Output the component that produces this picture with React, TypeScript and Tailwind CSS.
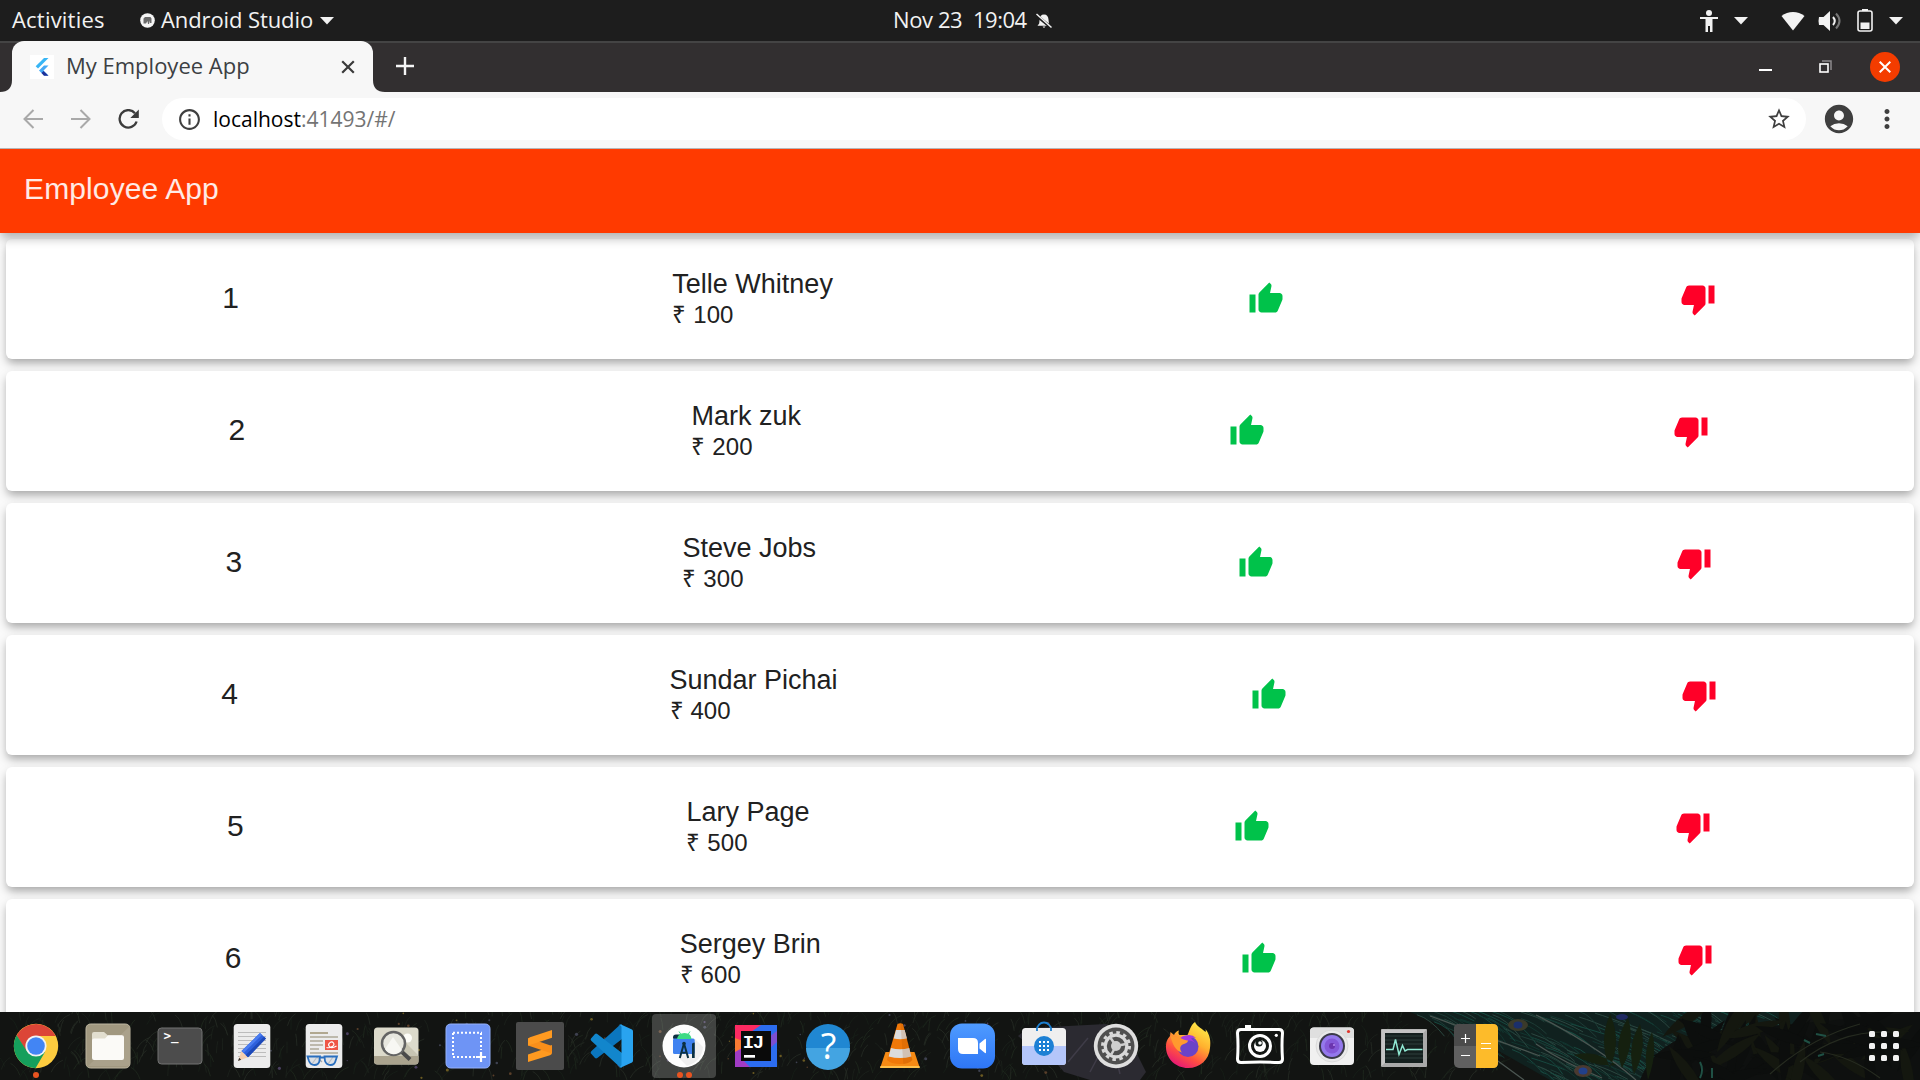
import React from "react";
import {
  MdThumbUp,
  MdThumbDown,
  MdInfoOutline,
  MdStarBorder,
  MdAccountCircle,
  MdMoreVert,
} from "react-icons/md";

const employees = [
  { id: 1, name: "Telle Whitney", salary: 100 },
  { id: 2, name: "Mark zuk", salary: 200 },
  { id: 3, name: "Steve Jobs", salary: 300 },
  { id: 4, name: "Sundar Pichai", salary: 400 },
  { id: 5, name: "Lary Page", salary: 500 },
  { id: 6, name: "Sergey Brin", salary: 600 },
];

const Caret = () => (
  <svg width="14" height="8" viewBox="0 0 14 8" fill="#f2f2f2">
    <path d="M0 0h14L7 7.5z" />
  </svg>
);

function TopBar() {
  return (
    <header className="grid h-[41px] shrink-0 grid-cols-[893px_1fr_auto] items-center bg-[#1d1d1d] font-['Open_Sans',sans-serif] text-[22px] leading-none whitespace-pre text-[#f2f2f2]">
      <div className="flex items-center pl-3">
        <span className="w-[128px] pb-[3px] tracking-[0.2px]">Activities</span>
        <svg width="15" height="15" viewBox="0 0 15 15">
          <circle cx="7.5" cy="7.5" r="7.3" fill="#f5f5f5" />
          <path d="M3.500 5.500L5 4h5.500l1 1.500V10H10V7.500L9 11H8L7.500 8 6 10.500H3.500z" fill="#6a6a6a" />
        </svg>
        <span className="ml-[6px] w-[159px] pb-[3px] tracking-[-0.1px]">Android Studio</span>
        <Caret />
      </div>
      <div className="flex items-center">
        <span className="w-[80px] pb-[3px] tracking-[-0.4px]">Nov 23</span>
        <span className="w-[63px] pb-[3px] tracking-[-0.5px]">19:04</span>
        <svg width="16" height="16" viewBox="0 0 16 16">
          <path d="M8 1.500c3 0 4.300 2 4.500 5l.4 4 1.600 2.200H1.500L3.200 10.500l.4-4C3.800 3.500 5 1.500 8 1.500zM6.500 13.500h3L8 15z" fill="#f2f2f2" />
          <path d="M.5 2.500L14.500 14" stroke="#1d1d1d" strokeWidth="3" />
          <path d="M.5 1L15.500 14.500" stroke="#f2f2f2" strokeWidth="1.500" />
        </svg>
      </div>
      <div className="flex items-center pr-[17px]">
        <svg width="18" height="22" viewBox="0 0 18 22" fill="#f2f2f2">
          <circle cx="9" cy="3" r="3" />
          <path d="M0 7h18v2h-5.500v13H10v-6H8v6H5.500V9H0z" />
        </svg>
        <span className="ml-4"><Caret /></span>
        <svg className="ml-[33px]" width="24" height="20" viewBox="0 0 24 20">
          <path d="M.5 5C7-.3 17-.3 23.500 5L12 19.500z" fill="#f2f2f2" />
        </svg>
        <svg className="ml-[13px]" width="23" height="22" viewBox="0 0 23 22">
          <path d="M1 7h4.500L12 1v20l-6.500-6H1q-1-4 0-8z" fill="#f2f2f2" />
          <path d="M15 7q3.500 4 0 8" stroke="#f2f2f2" strokeWidth="2" fill="none" />
          <path d="M18 3.500q7 7.500 0 15" stroke="#777" strokeWidth="2" fill="none" />
        </svg>
        <svg className="ml-4" width="16" height="23" viewBox="0 0 16 23">
          <path d="M5 0h6v2H5z" fill="#f2f2f2" />
          <rect x="1" y="2" width="14" height="20" rx="2" fill="none" stroke="#f2f2f2" strokeWidth="1.600" />
          <path d="M3.500 13.500h9V20h-9z" fill="#f2f2f2" />
        </svg>
        <span className="ml-4"><Caret /></span>
      </div>
    </header>
  );
}

function TabStrip() {
  return (
    <div className="flex h-[51px] shrink-0 justify-between border-t-2 border-[#444444] bg-[#322f30]">
      <div className="flex">
        <div className="flex w-3 items-end">
          <svg width="12" height="12" viewBox="0 0 12 12">
            <path d="M0 12Q12 12 12 0V12z" fill="#f7f7f7" />
          </svg>
        </div>
        <div className="-mt-[2px] flex h-[51px] w-[361px] items-center rounded-t-[12px] bg-[#f7f7f7] pl-[18px]">
          <svg width="24" height="24" viewBox="0 0 24 24">
            <path d="M0 0h24v24H0z" fill="#fff" />
            <path d="M14 3h4.500L8 13.500 5.700 11.200z" fill="#38b6f5" />
            <path d="M14 10.500h4.500L13.500 15.500l5 5H14L9 15.500z" fill="#45a9f5" />
            <path d="M11.500 18l2-2 5 4.800H14z" fill="#1d2f98" />
          </svg>
          <span className="ml-3 w-[275px] pb-[3px] font-['Open_Sans',sans-serif] text-[22px] leading-none text-[#3c4043]">
            My Employee App
          </span>
          <svg width="14" height="14" viewBox="0 0 14 14" stroke="#3a3a3a" strokeWidth="2.200">
            <path d="M1.200 1.200l11.600 11.600M12.800 1.200L1.200 12.800" />
          </svg>
        </div>
        <div className="flex w-3 items-end">
          <svg width="12" height="12" viewBox="0 0 12 12">
            <path d="M0 0Q0 12 12 12H0z" fill="#f7f7f7" />
          </svg>
        </div>
        <svg className="mt-[14px] ml-[11px]" width="18" height="18" viewBox="0 0 18 18" stroke="#f5f5f5" strokeWidth="2.400">
          <path d="M9 0v18M0 9h18" />
        </svg>
      </div>
      <div className="flex items-center pr-5 pb-[2px]">
        <svg className="mt-[7px]" width="13" height="2"><path d="M0 0h13v2H0z" fill="#fff" /></svg>
        <svg className="ml-[47px]" width="13" height="13" viewBox="0 0 13 13" fill="none">
          <path d="M3 1h9v9" stroke="#8d8b8c" strokeWidth="1.500" />
          <rect x="1" y="4" width="8" height="8" stroke="#fff" strokeWidth="1.600" />
        </svg>
        <div className="ml-[38px] grid size-[30px] place-items-center rounded-full bg-[#f43c00]">
          <svg width="12" height="12" viewBox="0 0 12 12" stroke="#fff" strokeWidth="2">
            <path d="M.7.7l10.600 10.600M11.300.7L.7 11.300" />
          </svg>
        </div>
      </div>
    </div>
  );
}

function Toolbar() {
  return (
    <div className="flex h-[57px] shrink-0 items-center border-b border-[#b6b4b6] bg-[#f7f7f7] pb-[2px] text-[#3f3f3f]">
      <svg className="ml-[23px]" width="20" height="20" viewBox="0 0 20 20" fill="none" stroke="#a9a9a9" strokeWidth="2">
        <path d="M20 10H1.500M10.500 1L1.500 10l9 9" />
      </svg>
      <svg className="ml-7" width="20" height="20" viewBox="0 0 20 20" fill="none" stroke="#a9a9a9" strokeWidth="2">
        <path d="M0 10h18.500M9.500 1l9 9-9 9" />
      </svg>
      <svg className="ml-[27px]" width="22" height="20" viewBox="0 0 22 20" fill="none">
        <path d="M17 4.200A8.700 8.700 0 1 0 18.600 12.500" stroke="#3c3c3c" strokeWidth="2.300" />
        <path d="M20.800.5v8.500h-8.500z" fill="#3c3c3c" />
      </svg>
      <div className="ml-[22px] flex h-[42px] flex-1 items-center rounded-full bg-white">
        <MdInfoOutline className="ml-[15px] size-[25px]" />
        <span className="ml-[11px] flex-1 font-['Open_Sans',sans-serif] text-[21px] leading-none text-black">
          localhost<span className="text-[#747474]">:41493/#/</span>
        </span>
        <MdStarBorder className="mr-[14px] size-[26px]" />
      </div>
      <MdAccountCircle className="ml-4 size-[34px]" />
      <MdMoreVert className="mr-[18px] ml-4 size-[30px]" />
    </div>
  );
}

function EmployeeCard({ id, name, salary }: { id: number; name: string; salary: number }) {
  return (
    <div className="flex h-[120px] shrink-0 items-center justify-around rounded-[6px] bg-white shadow-[0_5px_10px_-1px_rgba(0,0,0,0.34)]">
      <span className="pb-[2px] text-[30px] leading-none">{id}</span>
      <div className="pl-px">
        <p className="-mt-px pb-px text-[27px] leading-[31px]">{name}</p>
        <p className="text-[24px] leading-[28px] tracking-[0.1px]">₹ {salary}</p>
      </div>
      <div className="flex w-0 justify-center">
        <MdThumbUp className="ml-px size-9 shrink-0 text-[#00c24a]" />
      </div>
      <div className="flex w-0 justify-center">
        <MdThumbDown className="size-9 shrink-0 text-[#ff0028]" />
      </div>
    </div>
  );
}

const glyph = (children: React.ReactNode) => (
  <svg width="48" height="48" viewBox="0 0 48 48" className="relative overflow-visible">
    {children}
  </svg>
);

const chrome = glyph(
  <>
    <circle cx="24" cy="24" r="22.200" fill="#fdcc3f" />
    <path d="M4.600 13.500A22.200 22.200 0 0 1 43.700 14H24L14 29z" fill="#dc4537" />
    <path d="M4.600 13.300A22.200 22.200 0 0 0 23.500 46.200L33 30 24 33 14.800 29z" fill="#159f5c" />
    <circle cx="24" cy="24" r="10.600" fill="#f2f2f2" />
    <circle cx="24" cy="24" r="8.800" fill="#4285f4" />
  </>
);

const files = glyph(
  <>
    <rect x="2" y="2" width="44" height="44" rx="4.500" fill="#a19880" stroke="#bdb5a0" />
    <path d="M46 4L4 44h38q4 0 4-4z" fill="#aaa18b" />
    <path d="M8 12q0-2 2-2h10l4 3.500h14v8H8z" fill="#e2decf" />
    <path d="M8 18.500q0-2 2-2h11l3-3.300h14q2 0 2 2V36q0 2-2 2H10q-2 0-2-2z" fill="#fbfaf7" />
  </>
);

const terminal = glyph(
  <>
    <rect x="2" y="6" width="44" height="36" rx="3.500" fill="#4c4c4c" stroke="#727272" />
    <text x="7.500" y="18" fill="#fff" fontFamily="DejaVu Sans Mono" fontSize="12.500" fontWeight="700">&gt;_</text>
  </>
);

const editor = glyph(
  <>
    <rect x="5.700" y="2" width="36.600" height="44" rx="3.500" fill="#ececec" />
    <path d="M10 10.500h28M10 14.500h28M10 18.500h28M10 22.500h28M10 26.500h28M10 30.500h28M10 34.500h28" stroke="#bcbcbc" />
    <path d="M10 39l3.500-10 6.500 6.300z" fill="#f6cfae" />
    <path d="M10 39l1.200-3.300 2 2z" fill="#333" />
    <path d="M13.500 29L32 11l6 5.500L20 35.300z" fill="#2e60dc" />
    <path d="M13.500 29L32 11l2 1.900L15.700 31z" fill="#4b7df0" />
    <path d="M17.700 33.100L36 14.700l2 1.800L20 35.300z" fill="#1d49b8" />
  </>
);

const documentViewer = glyph(
  <>
    <rect x="5.700" y="2" width="36.600" height="44" rx="3.500" fill="#ececec" />
    <path d="M10 11h18" stroke="#b1a890" strokeWidth="2" />
    <path d="M10 15h28M10 19h13M10 23h13M10 27h9M10 31h28" stroke="#bdb9ac" strokeWidth="1.800" />
    <path d="M25 18h13v10H25z" fill="#ef5545" />
    <path d="M26.500 25.500c4 1 9-2 7-4.500s-6 .5-4.500 3 5 1.500 7.500 0" stroke="#fff" strokeWidth="1.200" fill="none" />
    <path d="M12 42l5-7M22 40l-5-5M28 42l5-7" stroke="#aaa" strokeWidth="1.200" />
    <path d="M7.500 34.500h12.500l-.5 4.500q-1 4-5 4t-5.500-4zM24.500 34.500H37L35.500 39q-1 4-5 4t-5.500-4zM20 35.500h4.500" stroke="#2a6fbe" strokeWidth="1.800" fill="#c9d4df" fillOpacity=".5" />
  </>
);

const imageViewer = glyph(
  <>
    <rect x="2" y="5.500" width="44.500" height="37" rx="3.500" fill="#dcdacb" />
    <path d="M2 34h44.500v5q0 3.500-3.500 3.500H5.500Q2 42.500 2 39z" fill="#aaa38e" />
    <path d="M22 34l12-13 12 12v1z" fill="#c7c4b2" />
    <circle cx="35.500" cy="16" r="4.500" fill="#fdfdf8" />
    <path d="M30 30l8 7.500" stroke="#4a4a4a" strokeWidth="4" />
    <circle cx="21.500" cy="21.500" r="11.500" fill="#e7e7df" stroke="#646464" strokeWidth="2.500" />
    <path d="M13 27l8-12 9 13a10 10 0 0 1-17-1z" fill="#f7f7f3" />
  </>
);

const screenshotTool = glyph(
  <>
    <rect x="2" y="2" width="44" height="44" rx="4.500" fill="#6e94f5" stroke="#94b0fa" />
    <path d="M9 10.800h29M9 35h22M9 11v24M37 11v17" stroke="#fff" strokeWidth="2" strokeDasharray="2 2" fill="none" />
    <path d="M37 30v10M32 35h10" stroke="#fff" strokeWidth="2.200" />
  </>
);

const sublime = glyph(
  <>
    <rect width="48" height="48" rx="2" fill="#4b4b4b" />
    <path d="M36 23v7.500q0 2-2 2.700L12 40v-7.500L28 27z" fill="#ff9a20" />
    <path d="M12 16v7.500l24 8V24L20 18.500z" fill="#f98f1a" />
    <path d="M36 8v7.700l-16 5.300-8 2.500V18q0-2 2-2.700z" fill="#ff9a20" />
  </>
);

const vscode = glyph(
  <>
    <path d="M3 31.500l4 4.500q1 .8 2.300 0L34 17V2.500q-1.500 0-3 1.200L3.500 29q-1.500 1.200-.5 2.500z" fill="#0b76be" />
    <path d="M3 16.500L7 12q1-.8 2.300 0L34 31v14.500q-1.500 0-3-1.200L3.500 19q-1.500-1.200-.5-2.500z" fill="#1286cc" />
    <path d="M33 2.500l11 5q1 .6 1 2v29q0 1.400-1 2l-11 5q-1.500.4-2.500-1 3 1 3-2V5.500q0-3-3-2 1-1.300 2.500-1z" fill="#29a3ef" />
  </>
);

const androidStudio = glyph(
  <>
    <circle cx="24" cy="24" r="21.500" fill="#fdfdfd" />
    <path d="M35 17l8 8q-1 14-16 19l-8-8z" fill="#efefef" />
    <path d="M13 15.500q0-3 3-3h4v5h-5q-2 0-2-2z" fill="#0c3040" />
    <rect x="13" y="16.500" width="21.700" height="15.500" rx="1.500" fill="#3f82f0" />
    <path d="M17 17q1-6 7.500-6T31.500 17z" fill="#3ddb84" />
    <path d="M19 9.500l2 3M30 9.500l-2 3" stroke="#3ddb84" />
    <path d="M32 22q0-1.500 2.700-1.500V36H32z" fill="#0c3040" />
    <path d="M24 21.500L19.800 36M24 21.500L28.200 36M21.500 30q2.500 1.500 5 0" stroke="#0c3040" strokeWidth="2" fill="none" />
    <circle cx="24" cy="21.500" r="1.800" fill="#0c3040" />
  </>
);

const intellij = glyph(
  <>
    <path d="M3 3h42v42H3z" fill="#2c6df0" />
    <path d="M3 3h26L16 12 3 24z" fill="#fd2a62" />
    <path d="M3 16l8 3v9l-8 7z" fill="#f87a33" />
    <path d="M3 30l9-5v14l6 6H3z" fill="#a13bc4" />
    <path d="M45 9v11l-8 7V15z" fill="#7c4fd0" />
    <path d="M9 9h30v30H9z" fill="#0a0a0a" />
    <text x="10.800" y="25.500" fill="#fff" fontFamily="Liberation Mono" fontSize="19" fontWeight="700" letterSpacing="-1.500">IJ</text>
    <path d="M12 33h11v2.700H12z" fill="#fff" />
  </>
);

const help = glyph(
  <>
    <circle cx="24" cy="24" r="22" fill="#2087d2" />
    <path d="M2 26a22 22 0 0 0 44 0z" fill="#43a4e2" />
    <text x="24.500" y="37" textAnchor="middle" fill="#fff" fontFamily="Open Sans" fontSize="36">?</text>
  </>
);

const vlc = glyph(
  <>
    <path d="M9.500 30h29l5.200 15.500H4.300z" fill="#f68a14" />
    <path d="M4.500 44h39l.3 2H4z" fill="#ffc04a" />
    <path d="M21.500 2q2.800-1.500 5.500 0l9.300 36q-3 4-12.200 4T11 38z" fill="#f07808" />
    <path d="M20 8h8.700l2.200 8.500q-6.700 1.500-13.200 0z" fill="#dcdcdc" />
    <path d="M15 26q9 2.500 18.200 0l2.200 8.500q-11 3-22.800 0z" fill="#dcdcdc" />
    <path d="M24.500 1q1.500 0 2.500 1l9.300 36q-3 3.500-9 4z" fill="#a04a00" opacity=".18" />
  </>
);

const zoomApp = glyph(
  <>
    <defs>
      <linearGradient id="zoomFill" x2="0" y2="1">
        <stop stopColor="#4f9bff" />
        <stop offset="1" stopColor="#2e76f6" />
      </linearGradient>
    </defs>
    <rect x="2" y="1.500" width="45" height="45" rx="12" fill="url(#zoomFill)" />
    <path d="M10 16h15q5 0 5 5v11H15q-5 0-5-5zM31.500 21.500l5.500-4.500q1-.6 1 .5v13q0 1-1 .5l-5.500-4.500z" fill="#fff" />
  </>
);

const software = glyph(
  <>
    <path d="M17 9V7.500a7 7 0 0 1 14 0V9" stroke="#1d7fd0" strokeWidth="1.800" fill="none" />
    <rect x="2" y="6" width="44" height="37" rx="3.500" fill="#efefef" />
    <path d="M2 24h44v15.500q0 3.500-3.500 3.500h-37Q2 43 2 39.500z" fill="#b4c6fa" />
    <path d="M17 6v3M31 6v3" stroke="#1d7fd0" strokeWidth="1.800" />
    <circle cx="24" cy="24" r="10" fill="#1d80d4" />
    <path d="M19 20h10M19 24h10M19 28h10" stroke="#fff" strokeWidth="2" strokeDasharray="2 2" />
  </>
);

const settings = glyph(
  <>
    <circle cx="24" cy="24" r="22.200" fill="#dedede" />
    <circle cx="24" cy="24" r="18.500" fill="#4f4f4f" />
    <circle cx="24" cy="24" r="13.500" fill="none" stroke="#d8d8d8" strokeWidth="3" strokeDasharray="3.530 3.530" />
    <circle cx="24" cy="24" r="10.800" fill="none" stroke="#d8d8d8" strokeWidth="3.200" />
    <circle cx="24" cy="24" r="5" fill="#cfcfcf" />
    <path d="M24 24l10-2M24 24l-5 9M24 24l-6-9" stroke="#cfcfcf" strokeWidth="2.500" />
  </>
);

const firefox = glyph(
  <>
    <defs>
      <linearGradient id="foxFill" x1=".8" y1="0" x2=".25" y2="1">
        <stop stopColor="#fff04a" />
        <stop offset=".4" stopColor="#ffb02e" />
        <stop offset=".7" stopColor="#ff5040" />
        <stop offset="1" stopColor="#e3127d" />
      </linearGradient>
    </defs>
    <path d="M31 0c2 5 8 7 10.500 10 .5-1 .3-2 0-3C46 13 47 19 46 26c-1 12-10 20-22 20S2.500 37 2 26c-.3-6 1.500-9 4-12l.5-4 3.500 3c1-2.500 3-4 5-4.500-1 2-.5 3.500.5 4.500l8 0c2-4 3-10 7.500-13z" fill="url(#foxFill)" />
    <circle cx="24" cy="24.500" r="10.500" fill="#6a43c8" />
    <path d="M14 19q3-6 11-6 4 0 7 3-3-.5-5 .5l6 6q-4-4-8-4-6 0-11 .5z" fill="#a33ae0" />
    <path d="M6.500 14l9 1.500q5 3 8.500 3 0 2-4 3.500c-4 1-5 5-2 8.500-6-1-10-9-11.500-16.500z" fill="#ff9a2e" />
  </>
);

const cameraOutline = glyph(
  <>
    <path d="M9 3h6v4H9z" fill="#fff" />
    <path d="M5 7.500h38q3.500 0 3.500 3.500-1 12 0 26 0 3.500-3.500 3.500-19-1-38 0Q1.500 40.500 1.500 37q1-13 0-26 0-3.500 3.500-3.500z" fill="none" stroke="#fff" strokeWidth="3" />
    <circle cx="24" cy="24" r="10.500" fill="none" stroke="#fff" strokeWidth="3" />
    <circle cx="24" cy="24" r="6" fill="#fff" />
    <circle cx="23" cy="21" r="3.600" fill="#121a16" />
    <circle cx="24" cy="21" r="1.800" fill="#fff" />
    <circle cx="40.300" cy="13.300" r="1.600" fill="#fff" />
  </>
);

const webcam = glyph(
  <>
    <rect x="2" y="5.500" width="44" height="37.500" rx="4" fill="#f0f0f0" />
    <path d="M2 16V9.500q0-4 4-4h36q4 0 4 4V16z" fill="#dfdfdf" />
    <circle cx="24" cy="24" r="16" fill="#e9e9e9" stroke="#d2d2d2" strokeWidth=".7" />
    <circle cx="24" cy="24" r="13" fill="#3a3a48" />
    <circle cx="24" cy="24" r="11" fill="#9478ec" />
    <circle cx="24" cy="24" r="7.500" fill="#8458d8" />
    <circle cx="24" cy="24" r="3" fill="#6b35ae" />
    <circle cx="26" cy="23" r="1" fill="#b98cf5" />
    <circle cx="40.500" cy="9.500" r="1.600" fill="#e0352b" />
  </>
);

const monitor = glyph(
  <>
    <rect x="1" y="7" width="46" height="38" rx="1" fill="#a9a9a9" />
    <path d="M1.500 7.500h45l-3 3.500H5v30l-3.500 3z" fill="#c4c4c4" />
    <path d="M5 11h38v30H5z" fill="#15201f" />
    <path d="M5 14h38M5 18h38M5 22h38M5 32h38M5 36h38" stroke="#2f3e3d" />
    <path d="M6 27.500h7l2.500-10L19 32.500l3.500-9 2.500 5.500 2.500-1.500h15" fill="none" stroke="#8fe8d2" strokeWidth="1.500" />
  </>
);

const calculator = glyph(
  <>
    <rect x="2" y="2" width="44" height="44" rx="5" fill="#606060" />
    <path d="M24 2H7Q2 2 2 7v17h22z" fill="#4b4b4b" />
    <path d="M24 2h17q5 0 5 5v34q0 5-5 5H24z" fill="#fdbb2a" />
    <path d="M13.500 12v9M9 16.500h9M9 33.500h9M29 21.500h10M29 26.500h10" stroke="#fff" strokeWidth="1.200" />
  </>
);

const dock = [
  { key: "Chrome", icon: chrome, windows: 1 },
  { key: "Files", icon: files },
  { key: "Terminal", icon: terminal },
  { key: "Text Editor", icon: editor },
  { key: "Document Viewer", icon: documentViewer },
  { key: "Image Viewer", icon: imageViewer },
  { key: "Screenshot", icon: screenshotTool },
  { key: "Sublime Text", icon: sublime },
  { key: "VS Code", icon: vscode },
  { key: "Android Studio", icon: androidStudio, windows: 2, active: true },
  { key: "IntelliJ IDEA", icon: intellij },
  { key: "Help", icon: help },
  { key: "VLC", icon: vlc },
  { key: "Zoom", icon: zoomApp },
  { key: "Software", icon: software },
  { key: "Settings", icon: settings },
  { key: "Firefox", icon: firefox },
  { key: "Camera", icon: cameraOutline },
  { key: "Cheese", icon: webcam },
  { key: "System Monitor", icon: monitor },
  { key: "Calculator", icon: calculator },
];

// Deterministic pseudo-random value in [0, 1) for the wallpaper strokes.
const rnd = (n: number) => {
  const v = Math.sin(n * 127.1 + 11.7) * 43758.5453;
  return v - Math.floor(v);
};

function Wallpaper() {
  const grassTones = ["#1f2a1e", "#171f18", "#262c25", "#1c221c"];
  const featherTones = ["#17483f", "#1d3c36", "#2b4740", "#12352f"];
  const flowerTones = ["#6a5a22", "#4b4060", "#5a3f2a", "#3e4150"];
  return (
    <svg className="absolute inset-0" width="1920" height="68" viewBox="0 0 1920 68" preserveAspectRatio="none">
      <rect width="1920" height="68" fill="#121412" />
      {Array.from({ length: 900 }, (_, i) => {
        const x = rnd(i) * 1500;
        const y = rnd(i + 2000) * 72;
        const dx = (rnd(i + 4000) - 0.4) * 24;
        return (
          <path key={i} d={`M${x} ${y}q${dx / 3} -9 ${dx} -12`} stroke={grassTones[i % 4]} strokeWidth=".8" fill="none" />
        );
      })}
      {Array.from({ length: 80 }, (_, i) => (
        <circle key={i} cx={250 + rnd(i + 70) * 800} cy={rnd(i + 900) * 66} r={0.6 + rnd(i + 50)} fill={flowerTones[i % 4]} />
      ))}
      <path d="M1018 24l10-8 40-2 38-2 22 12 18 36-6 8h-50l-26-8-12-14-20-10z" fill="#2b2a31" />
      <path d="M1068 50l20-24M1090 60l18-34M1120 62l-10-40M1030 22l30 10" stroke="#3f3c48" strokeWidth="1.500" />
      <path d="M1410 0h400l-30 26-50 42h-180l-60-34z" fill="#10211f" />
      {Array.from({ length: 320 }, (_, i) => {
        const x = 1410 + rnd(i + 300) * 370;
        const y = rnd(i + 700) * 72 - 6;
        if (x < 1536 && y > (x - 1410) * 0.5) return null;
        return (
          <path key={i} d={`M${x} ${y}q14 4 ${22 + rnd(i) * 14} ${10 + rnd(i + 9) * 14}`} stroke={featherTones[i % 4]} fill="none" />
        );
      })}
      <path d="M1480 36l44 32M1536 3q60 30 100 65M1536 32q30 20 66 34M1430 4l110 40" stroke="#4b5551" strokeWidth="1.300" fill="none" />
      <ellipse cx="1518" cy="13" rx="10" ry="6" fill="#3a3a2a" />
      <ellipse cx="1518" cy="13" rx="4.500" ry="3.500" fill="#1b2f6b" />
      <ellipse cx="1583" cy="59" rx="9" ry="6" fill="#4a3a30" />
      <ellipse cx="1583" cy="59" rx="4.500" ry="3.500" fill="#22408a" />
      <ellipse cx="1622" cy="5" rx="6" ry="3" fill="#202a63" />
      <path d="M1640 68q20-50 90-50l190-18v68z" fill="#0e100f" />
      {Array.from({ length: 60 }, (_, i) => {
        const x = 1668 + rnd(i + 33) * 250;
        const y = 4 + rnd(i + 55) * 62;
        const a = rnd(i + 77) * 180;
        return (
          <path key={i} d="M-32 0Q0 -11 32 0Q0 11 -32 0z" transform={`translate(${x} ${y}) rotate(${a})`} fill={i % 3 ? "#0c0e0d" : "#14170f"} />
        );
      })}
      <path d="M1610 2q-12 28 0 54 12-28 0-54zM1628 6q-16 24-6 50 14-26 6-50zM1640 12q-14 22-6 50 14-26 6-50zM1574 43q22-6 42 10-22 2-42-10zM1652 20q-10 20-4 48 10-28 4-48z" fill="#15200f" />
      <path d="M1800 50q40-32 90-30M1770 62q40-36 90-50M1820 40q30 4 60 26" stroke="#262b20" strokeWidth="1.200" fill="none" />
      <path d="M1700 50q4 8 0 16M1712 56v10M1804 28l6 3M1816 22l10 2M1818 44l6-2" stroke="#1f5044" strokeWidth="2" />
    </svg>
  );
}

function Dock() {
  return (
    <nav className="relative flex h-[68px] shrink-0 overflow-hidden bg-[#111412]">
      <Wallpaper />
      {dock.map(({ key, icon, windows = 0, active }) => (
        <div key={key} aria-label={key} className="relative flex w-[72px] items-center justify-center">
          {active && <div className="absolute inset-x-1 top-[2px] bottom-[2px] rounded-[4px] bg-white/20" />}
          {icon}
          {windows > 0 && (
            <div className="absolute inset-x-0 bottom-[2px] flex justify-center gap-[3px]">
              {Array.from({ length: windows }, (_, i) => (
                <span key={i} className="size-[6px] rounded-full bg-[#e95420]" />
              ))}
            </div>
          )}
        </div>
      ))}
      <div className="relative mr-[21px] ml-auto grid grid-cols-3 content-center gap-[6px]">
        {Array.from({ length: 9 }, (_, i) => (
          <span key={i} className="size-[6px] rounded-[1.5px] bg-[#f2f2f2]" />
        ))}
      </div>
    </nav>
  );
}

export default function App() {
  return (
    <div className="flex h-[1080px] w-[1920px] flex-col overflow-hidden">
      <TopBar />
      <TabStrip />
      <Toolbar />
      <main className="flex min-h-0 flex-1 flex-col overflow-hidden bg-[#fafafa] font-['Liberation_Sans',Arial,sans-serif] text-[#212121]">
        <div className="relative z-10 flex h-[84px] shrink-0 items-center bg-[#ff3a00] pb-1 pl-6 text-[30px] leading-none tracking-[0.12px] text-white/90 shadow-[0_6px_10px_-1px_rgba(0,0,0,0.3)]">
          Employee App
        </div>
        <div className="flex min-h-0 flex-1 flex-col gap-3 overflow-hidden p-[6px]">
          {employees.map((e) => (
            <EmployeeCard key={e.id} {...e} />
          ))}
        </div>
      </main>
      <Dock />
    </div>
  );
}
